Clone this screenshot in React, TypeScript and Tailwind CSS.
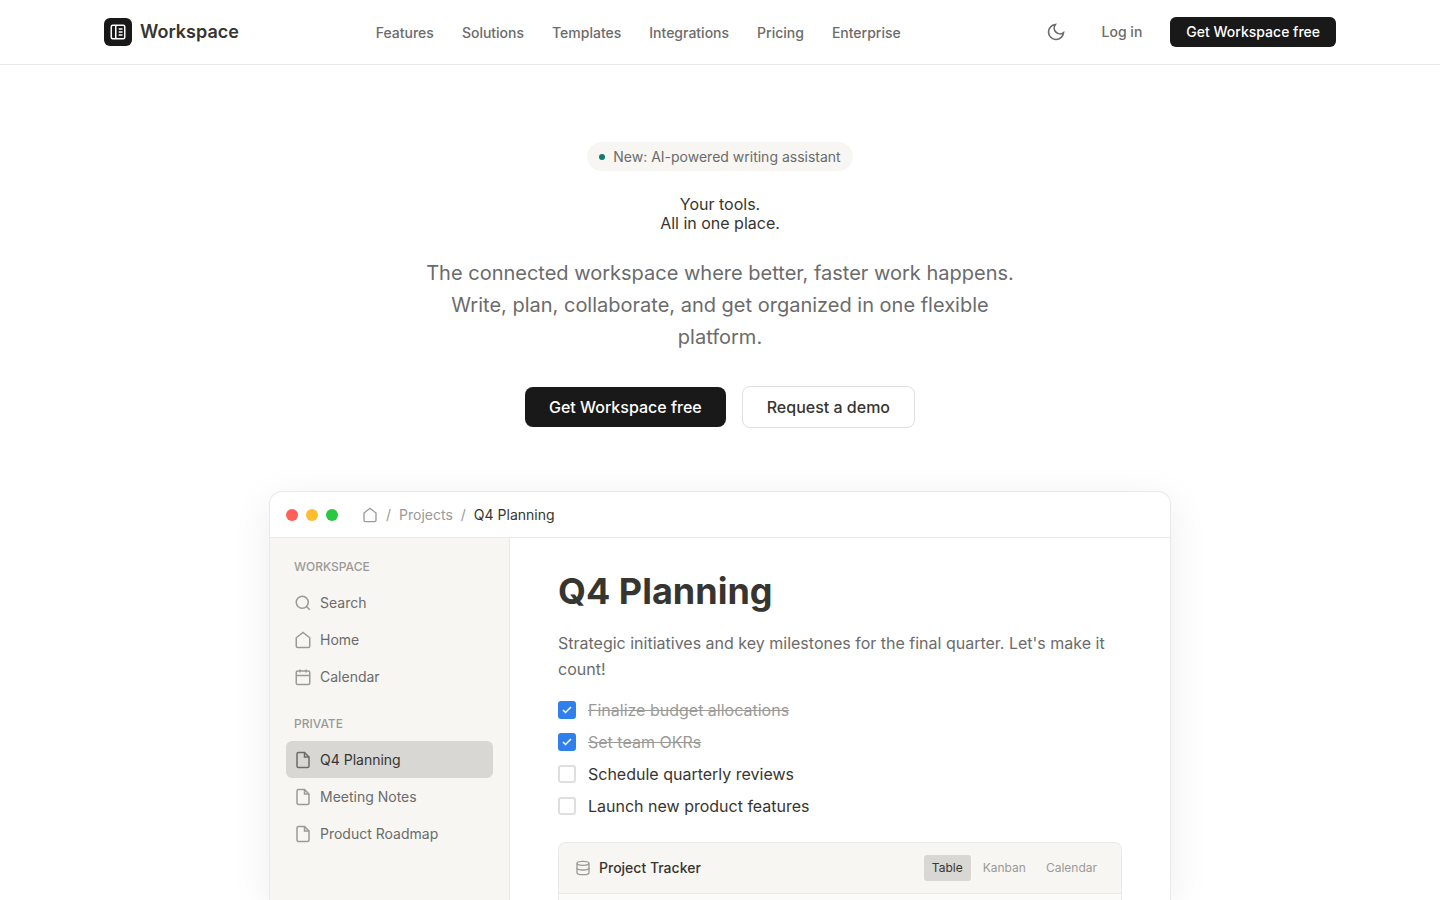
import type { ReactNode } from "react";

const navLinks = ["Features", "Solutions", "Templates", "Integrations", "Pricing", "Enterprise"];

const tasks = [
  { id: "budget", label: "Finalize budget allocations", done: true },
  { id: "okrs", label: "Set team OKRs", done: true },
  { id: "reviews", label: "Schedule quarterly reviews", done: false },
  { id: "launch", label: "Launch new product features", done: false },
];

const views = ["Table", "Kanban", "Calendar"];

function Icon({ size, children, className = "" }: { size: number; children: ReactNode; className?: string }) {
  return (
    <svg
      width={size}
      height={size}
      viewBox="0 0 24 24"
      fill="none"
      stroke="currentColor"
      strokeWidth="2"
      className={`shrink-0 ${className}`}
      aria-hidden="true"
    >
      {children}
    </svg>
  );
}

const homePath = <path d="M3 9l9-7 9 7v11a2 2 0 0 1-2 2H5a2 2 0 0 1-2-2z" />;

const filePath = (
  <>
    <path d="M14 2H6a2 2 0 0 0-2 2v16a2 2 0 0 0 2 2h12a2 2 0 0 0 2-2V8z" />
    <path d="M14 2v6h6" />
  </>
);

const searchPath = (
  <>
    <circle cx="11" cy="11" r="8" />
    <path d="M21 21l-4.35-4.35" />
  </>
);

const calendarPath = (
  <>
    <rect x="3" y="4" width="18" height="18" rx="2" />
    <path d="M16 2v4M8 2v4M3 10h18" />
  </>
);

function Header() {
  return (
    <header className="border-b border-[#e9e9e7] bg-white">
      <div className="mx-auto flex h-16 max-w-7xl items-center justify-between px-6">
        <a href="#" className="flex items-center gap-2 text-lg font-semibold">
          <span className="flex size-7 items-center justify-center rounded-md bg-[#191919] text-white">
            <Icon size={18}>
              <rect x="3" y="3" width="18" height="18" rx="2" />
              <path d="M9 3v18M13 8h5M13 12h5M13 16h5" />
            </Icon>
          </span>
          Workspace
        </a>
        <nav className="flex items-center gap-7">
          {navLinks.map((link) => (
            <a key={link} href="#" className="text-sm leading-[21px] font-medium text-[#6b6b6b]">
              {link}
            </a>
          ))}
        </nav>
        <div className="flex items-center gap-3">
          <button type="button" aria-label="Toggle theme" className="flex size-9 items-center justify-center text-[#6b6b6b]">
            <Icon size={20}>
              <path d="M21 12.79A9 9 0 1 1 11.21 3 7 7 0 0 0 21 12.79z" />
            </Icon>
          </button>
          <a href="#" className="px-4 text-sm font-medium text-[#6b6b6b]">
            Log in
          </a>
          <button type="button" className="rounded-md bg-[#191919] px-4 py-1 text-sm leading-[22px] font-medium text-white">
            Get Workspace free
          </button>
        </div>
      </div>
    </header>
  );
}

function Hero() {
  return (
    <section className="flex flex-col items-center px-6 pt-[77px] pb-16 text-center">
      <div className="mb-6 flex items-center gap-2 rounded-full bg-[#f7f6f3] px-3 py-1 text-sm leading-[21px] text-[#6b6b6b]">
        <span className="size-1.5 rounded-full bg-[#0f7b6c]" />
        New: AI-powered writing assistant
      </div>
      <h1 className="mb-6 text-base leading-[19px]">
        Your tools.
        <br />
        All in one place.
      </h1>
      <p className="mb-[33px] max-w-[600px] text-xl leading-8 text-[#6b6b6b]">
        The connected workspace where better, faster work happens. Write, plan, collaborate, and get organized in one
        flexible platform.
      </p>
      <div className="flex items-center gap-4">
        <button type="button" className="rounded-lg bg-[#191919] px-6 py-2 font-medium text-white">
          Get Workspace free
        </button>
        <button type="button" className="rounded-lg border border-[#dfdfde] bg-white px-6 py-2 font-medium">
          Request a demo
        </button>
      </div>
    </section>
  );
}

function SidebarGroup({ title, children }: { title: string; children: ReactNode }) {
  return (
    <div>
      <h2 className="mb-1 px-2 py-1 text-xs leading-[18px] font-medium text-[#9b9a97] uppercase">{title}</h2>
      <ul>{children}</ul>
    </div>
  );
}

function SidebarItem({ label, icon, active = false }: { label: string; icon: ReactNode; active?: boolean }) {
  return (
    <li>
      <a
        href="#"
        className={`flex items-center gap-2 rounded-md px-2 py-2 text-sm leading-[21px] ${
          active ? "bg-[#d8d7d3] text-[#37352f]" : "text-[#6b6b6b]"
        }`}
      >
        <Icon size={18} className={active ? "text-[#6b6b6b]" : "text-[#9b9a97]"}>
          {icon}
        </Icon>
        {label}
      </a>
    </li>
  );
}

function Sidebar() {
  return (
    <aside className="flex w-60 shrink-0 flex-col gap-4 border-r border-[#e9e9e7] bg-[#f7f6f3] p-4">
      <SidebarGroup title="Workspace">
        <SidebarItem label="Search" icon={searchPath} />
        <SidebarItem label="Home" icon={homePath} />
        <SidebarItem label="Calendar" icon={calendarPath} />
      </SidebarGroup>
      <SidebarGroup title="Private">
        <SidebarItem label="Q4 Planning" icon={filePath} active />
        <SidebarItem label="Meeting Notes" icon={filePath} />
        <SidebarItem label="Product Roadmap" icon={filePath} />
      </SidebarGroup>
    </aside>
  );
}

function Task({ id, label, done }: { id: string; label: string; done: boolean }) {
  return (
    <li className="flex h-8 items-center gap-3">
      <span className="grid size-[18px] shrink-0">
        <input
          id={id}
          type="checkbox"
          defaultChecked={done}
          className="peer col-start-1 row-start-1 size-[18px] appearance-none rounded-[3px] border-2 border-[#dfdfde] bg-white checked:border-[#2f80ed] checked:bg-[#2f80ed]"
        />
        <svg
          viewBox="0 0 24 24"
          fill="none"
          stroke="currentColor"
          strokeWidth="3"
          className="pointer-events-none invisible col-start-1 row-start-1 size-3 place-self-center text-white peer-checked:visible"
          aria-hidden="true"
        >
          <path d="M20 6L9 17l-5-5" />
        </svg>
      </span>
      <label htmlFor={id} className={done ? "text-[#9b9a97] line-through" : ""}>
        {label}
      </label>
    </li>
  );
}

function Tracker() {
  return (
    <div className="flex flex-1 flex-col overflow-hidden rounded-t-lg border border-b-0 border-[#e9e9e7] bg-[#fbfbfa]">
      <div className="flex items-center justify-between border-b border-[#e9e9e7] bg-[#f7f6f3] px-4 py-3">
        <h3 className="flex items-center gap-2 text-sm font-medium">
          <Icon size={16} className="text-[#9b9a97]">
            <ellipse cx="12" cy="5" rx="9" ry="3" />
            <path d="M21 12c0 1.66-4 3-9 3s-9-1.34-9-3" />
            <path d="M3 5v14c0 1.66 4 3 9 3s9-1.34 9-3V5" />
          </Icon>
          Project Tracker
        </h3>
        <div className="flex gap-1">
          {views.map((view, i) => (
            <button
              key={view}
              type="button"
              className={`rounded-[3px] px-2 py-1 text-xs leading-[18px] ${
                i === 0 ? "bg-[#d8d7d3] text-[#37352f]" : "text-[#9b9a97]"
              }`}
            >
              {view}
            </button>
          ))}
        </div>
      </div>
      <div className="min-h-1.5 flex-1" />
    </div>
  );
}

function AppPreview() {
  return (
    <div className="flex w-full max-w-[900px] flex-1 flex-col overflow-hidden rounded-t-xl bg-white shadow-[0_0_0_1px_#e9e9e7,0_8px_40px_rgba(15,15,15,0.08)]">
      <div className="flex h-[46px] shrink-0 items-center gap-6 border-b border-[#e9e9e7] px-4">
        <div className="flex gap-2">
          <span className="size-3 rounded-full bg-[#ff5f57]" />
          <span className="size-3 rounded-full bg-[#febc2e]" />
          <span className="size-3 rounded-full bg-[#28c840]" />
        </div>
        <div className="flex items-center gap-2 text-sm text-[#9b9a97]">
          <Icon size={16}>{homePath}</Icon>
          <span>/</span>
          <a href="#">Projects</a>
          <span>/</span>
          <span className="text-[#37352f]">Q4 Planning</span>
        </div>
      </div>
      <div className="flex flex-1">
        <Sidebar />
        <div className="flex min-w-0 flex-1 flex-col px-12 pt-8">
          <h2 className="mb-[18px] text-4xl leading-[42px] font-bold">Q4 Planning</h2>
          <p className="mb-3 leading-[26px] text-[#6b6b6b]">
            Strategic initiatives and key milestones for the final quarter. Let's make it count!
          </p>
          <ul className="mb-5">
            {tasks.map((task) => (
              <Task key={task.id} {...task} />
            ))}
          </ul>
          <Tracker />
        </div>
      </div>
    </div>
  );
}

export default function App() {
  return (
    <div className="flex min-h-screen flex-col bg-white font-[Inter,sans-serif] text-[#37352f] antialiased">
      <Header />
      <main className="flex flex-1 flex-col">
        <Hero />
        <div className="flex flex-1 justify-center px-6">
          <AppPreview />
        </div>
      </main>
    </div>
  );
}
